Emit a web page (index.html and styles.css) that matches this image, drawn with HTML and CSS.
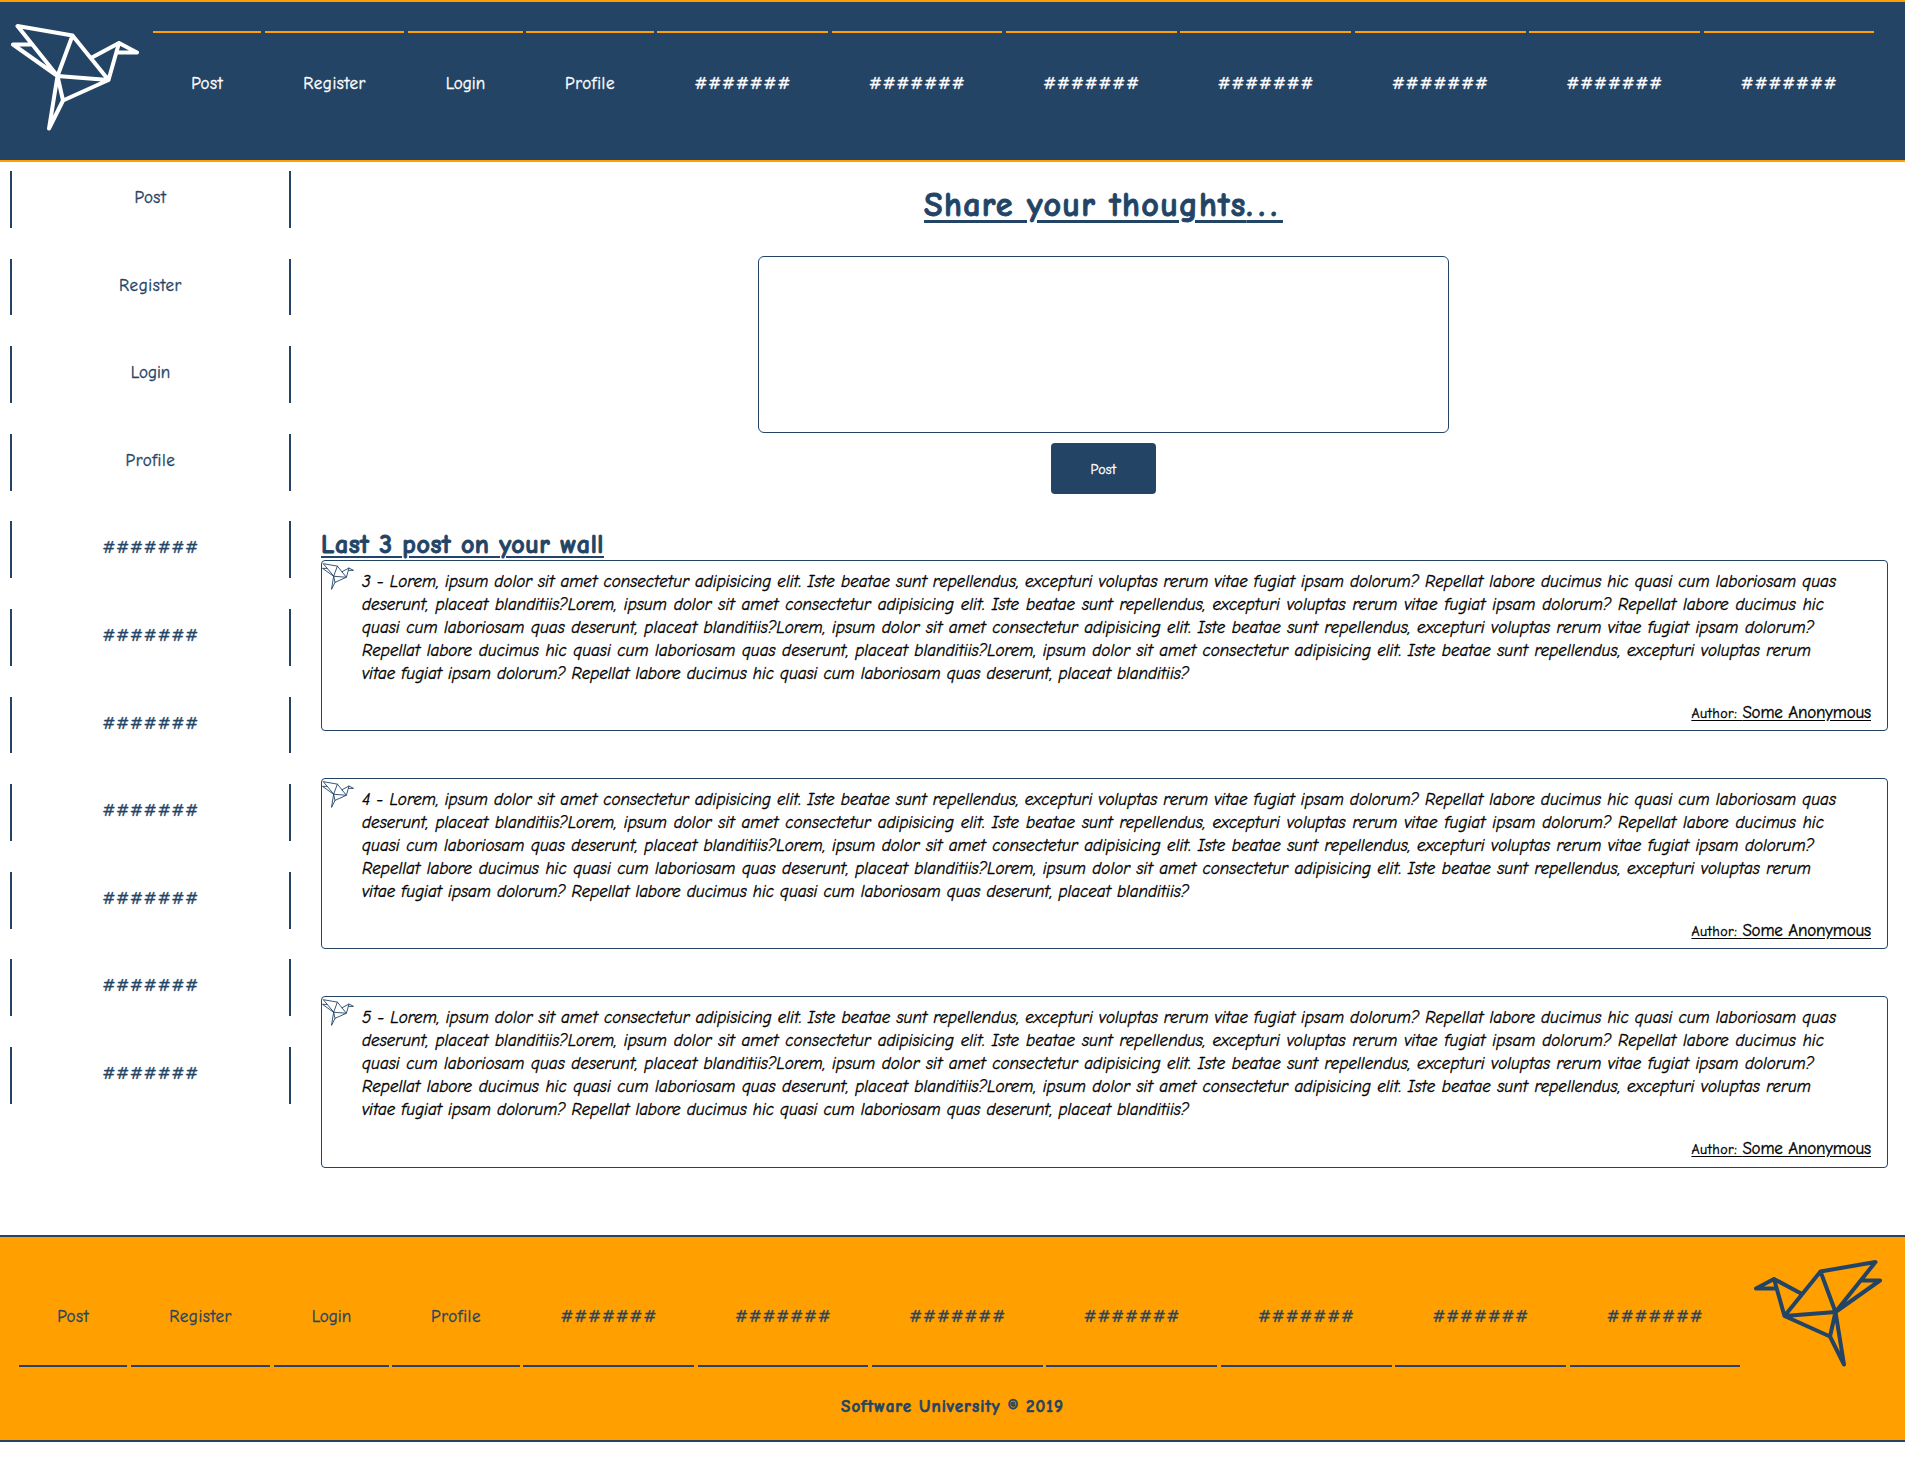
FILE: index.html
```html
<!DOCTYPE html>
<html lang="en">
<head>
<meta charset="utf-8">
<title>Social Media</title>
<link rel="stylesheet" href="styles.css">
</head>
<body>
<svg width="0" height="0" class="defs" aria-hidden="true">
  <symbol id="bird" viewBox="0 0 128 108">
    <path d="M6.5 3 61.500 12.500 97.500 57 52 77.500 46.500 53ZM61.500 12.500 46.500 53 97.500 57 108 20 80 35M108 20 126 29.500H107M46.500 53 2 21.500H20M46.500 53 38 105.500 52 77.500"/>
  </symbol>
</svg>
<header class="header">
  <svg class="bird"><use href="#bird"/></svg>
  <nav class="menu">
    <a class="post">Post</a><a class="register">Register</a><a class="login">Login</a><a class="profile">Profile</a><a>#######</a><a>#######</a><a>#######</a><a>#######</a><a>#######</a><a>#######</a><a>#######</a>
  </nav>
</header>
<div class="content">
  <aside class="sidebar">
    <a>Post</a><a>Register</a><a>Login</a><a>Profile</a><a>#######</a><a>#######</a><a>#######</a><a>#######</a><a>#######</a><a>#######</a><a>#######</a>
  </aside>
  <main class="main">
    <h1>Share your thoughts<span class="dots">...</span></h1>
    <textarea></textarea>
    <button>Post</button>
    <h2><span>Last 3 post on your wall</span></h2>
    <article>
      <svg class="mini"><use href="#bird"/></svg>
      <p><span class="l1">3 - Lorem, ipsum dolor sit amet consectetur adipisicing elit. Iste beatae sunt repellendus, excepturi voluptas rerum vitae fugiat ipsam dolorum? Repellat labore ducimus hic quasi cum laboriosam quas</span>
      <span class="l2">deserunt, placeat blanditiis?Lorem, ipsum dolor sit amet consectetur adipisicing elit. Iste beatae sunt repellendus, excepturi voluptas rerum vitae fugiat ipsam dolorum? Repellat labore ducimus hic</span>
      <span class="l3">quasi cum laboriosam quas deserunt, placeat blanditiis?Lorem, ipsum dolor sit amet consectetur adipisicing elit. Iste beatae sunt repellendus, excepturi voluptas rerum vitae fugiat ipsam dolorum?</span>
      <span class="l4">Repellat labore ducimus hic quasi cum laboriosam quas deserunt, placeat blanditiis?Lorem, ipsum dolor sit amet consectetur adipisicing elit. Iste beatae sunt repellendus, excepturi voluptas rerum</span>
      <span class="l5">vitae fugiat ipsam dolorum? Repellat labore ducimus hic quasi cum laboriosam quas deserunt, placeat blanditiis?</span></p>
      <footer><small>Author: </small><b>Some Anonymous</b></footer>
    </article>
    <article>
      <svg class="mini"><use href="#bird"/></svg>
      <p><span class="l1">4 - Lorem, ipsum dolor sit amet consectetur adipisicing elit. Iste beatae sunt repellendus, excepturi voluptas rerum vitae fugiat ipsam dolorum? Repellat labore ducimus hic quasi cum laboriosam quas</span>
      <span class="l2">deserunt, placeat blanditiis?Lorem, ipsum dolor sit amet consectetur adipisicing elit. Iste beatae sunt repellendus, excepturi voluptas rerum vitae fugiat ipsam dolorum? Repellat labore ducimus hic</span>
      <span class="l3">quasi cum laboriosam quas deserunt, placeat blanditiis?Lorem, ipsum dolor sit amet consectetur adipisicing elit. Iste beatae sunt repellendus, excepturi voluptas rerum vitae fugiat ipsam dolorum?</span>
      <span class="l4">Repellat labore ducimus hic quasi cum laboriosam quas deserunt, placeat blanditiis?Lorem, ipsum dolor sit amet consectetur adipisicing elit. Iste beatae sunt repellendus, excepturi voluptas rerum</span>
      <span class="l5">vitae fugiat ipsam dolorum? Repellat labore ducimus hic quasi cum laboriosam quas deserunt, placeat blanditiis?</span></p>
      <footer><small>Author: </small><b>Some Anonymous</b></footer>
    </article>
    <article>
      <svg class="mini"><use href="#bird"/></svg>
      <p><span class="l1">5 - Lorem, ipsum dolor sit amet consectetur adipisicing elit. Iste beatae sunt repellendus, excepturi voluptas rerum vitae fugiat ipsam dolorum? Repellat labore ducimus hic quasi cum laboriosam quas</span>
      <span class="l2">deserunt, placeat blanditiis?Lorem, ipsum dolor sit amet consectetur adipisicing elit. Iste beatae sunt repellendus, excepturi voluptas rerum vitae fugiat ipsam dolorum? Repellat labore ducimus hic</span>
      <span class="l3">quasi cum laboriosam quas deserunt, placeat blanditiis?Lorem, ipsum dolor sit amet consectetur adipisicing elit. Iste beatae sunt repellendus, excepturi voluptas rerum vitae fugiat ipsam dolorum?</span>
      <span class="l4">Repellat labore ducimus hic quasi cum laboriosam quas deserunt, placeat blanditiis?Lorem, ipsum dolor sit amet consectetur adipisicing elit. Iste beatae sunt repellendus, excepturi voluptas rerum</span>
      <span class="l5">vitae fugiat ipsam dolorum? Repellat labore ducimus hic quasi cum laboriosam quas deserunt, placeat blanditiis?</span></p>
      <footer><small>Author: </small><b>Some Anonymous</b></footer>
    </article>
  </main>
</div>
<footer class="footer">
  <div class="footer-row">
    <nav class="menu">
      <a class="post">Post</a><a class="register">Register</a><a class="login">Login</a><a class="profile">Profile</a><a>#######</a><a>#######</a><a>#######</a><a>#######</a><a>#######</a><a>#######</a><a>#######</a>
    </nav>
    <svg class="bird flipped"><use href="#bird"/></svg>
  </div>
  <p class="copy"><span>Software University © 2019</span></p>
</footer>
</body>
</html>
```
FILE: styles.css
```css
* { box-sizing: border-box; }
body {
  margin: 0;
  background: #fff;
  color: #000;
  font: 17px/23px "Comic Sans MS", "Comic Neue", "Open Sans", sans-serif;
  -webkit-text-stroke-width: 0.35px;
}
.defs { display: block; height: 0; }
.bird, .mini { display: block; fill: none; stroke-linecap: round; stroke-linejoin: round; }
.bird { width: 128px; height: 108px; stroke-width: 4; }
.header {
  height: 162px;
  display: flex;
  background: #234465;
  border-top: 2px solid #ffa000;
  border-bottom: 2px solid #ffa000;
  color: #fff;
}
.header .bird { margin: 21px 14px 0 11px; stroke: #fff; }
.menu { display: flex; gap: 3.5px; }
.menu a { width: 170.9px; height: 104px; text-align: center; line-height: 101px; letter-spacing: 0.6px; }
.menu a:nth-child(n+5), .sidebar a:nth-child(n+5) { font-size: 18px; letter-spacing: 0.5px; }
.menu .post { width: 108.300px; }
.menu .register { width: 139.500px; }
.menu .login { width: 115.200px; }
.menu .profile { width: 127.200px; }
.menu .login { letter-spacing: 0; }
.header .menu { margin-top: 29px; }
.header .menu a { border-top: 2px solid #ffa000; }
.content { display: flex; height: 1073px; }
.sidebar { width: 281px; margin: 9px 30px 0 10px; display: flex; flex-direction: column; gap: 30.800px; }
.sidebar a {
  height: 56.800px;
  flex: none;
  border-left: 2px solid #234465;
  border-right: 2px solid #234465;
  color: #234465;
  text-align: center;
  line-height: 53px;
  letter-spacing: 0.6px;
}
.sidebar a:nth-child(3) { letter-spacing: 0; }
.main { width: 1567px; display: flex; flex-direction: column; }
h1, h2 { margin: 0; color: #234465; text-decoration: underline; white-space: nowrap; -webkit-text-stroke-width: 0.9px; }
h1 { font-size: 34px; line-height: 44px; margin: 21px 2px 0 0; text-align: center; letter-spacing: 1.3px; text-decoration-thickness: 3px; text-underline-offset: 4px; }
.dots { letter-spacing: 6px; }
textarea {
  width: 691px;
  height: 177px;
  margin: 29px 2px 10px 0;
  align-self: center;
  border: 1px solid #234465;
  border-radius: 6px;
  resize: none;
}
button {
  width: 105px;
  height: 51px;
  margin-right: 2px;
  padding-top: 3px;
  align-self: center;
  border: 0;
  border-radius: 4px;
  background: #234465;
  color: #fff;
  font-family: inherit;
  font-size: 14px;
  letter-spacing: 0.4px;
}
h2 { font-size: 26px; line-height: 30px; margin-top: 36px; letter-spacing: 0.55px; text-decoration-thickness: 2px; text-underline-offset: 3px; }
article {
  height: 171.400px;
  flex: none;
  margin-bottom: 46.700px;
  display: grid;
  grid-template-columns: 32px 1fr;
  grid-template-rows: 140px 1fr;
  border: 1px solid #234465;
  border-radius: 4px;
}
.mini { width: 32px; height: 27px; margin-top: 2px; stroke: #234465; stroke-width: 3.600; }
article p { margin: 9px 0 0 8px; font-style: italic; white-space: nowrap; letter-spacing: 0.04px; }
article p span { display: block; text-align-last: justify; }
.l1 { width: 1474px; }
.l2 { width: 1462px; }
.l3 { width: 1452px; }
.l4 { width: 1449px; }
.l5 { width: 827px; letter-spacing: -0.02px; }
article footer { grid-column: 1 / 3; padding-right: 16px; text-align: right; text-decoration: underline; text-underline-offset: 2px; }
small { font-size: 14px; letter-spacing: 0.5px; }
b { font-weight: 500; letter-spacing: -0.15px; }
.footer {
  height: 207px;
  background: #ffa000;
  border-top: 2px solid #234465;
  border-bottom: 2px solid #234465;
  color: #234465;
}
.footer-row { display: flex; height: 158px; padding-left: 19px; }
.footer .menu { margin-top: 26px; }
.footer .menu a { border-bottom: 2px solid #234465; line-height: 108px; }
.flipped { transform: scaleX(-1); margin: 22px 0 0 14px; stroke: #234465; }
.copy { margin: 0; text-align: center; font-weight: 700; letter-spacing: 1px; -webkit-text-stroke-width: 0.6px; }
```
